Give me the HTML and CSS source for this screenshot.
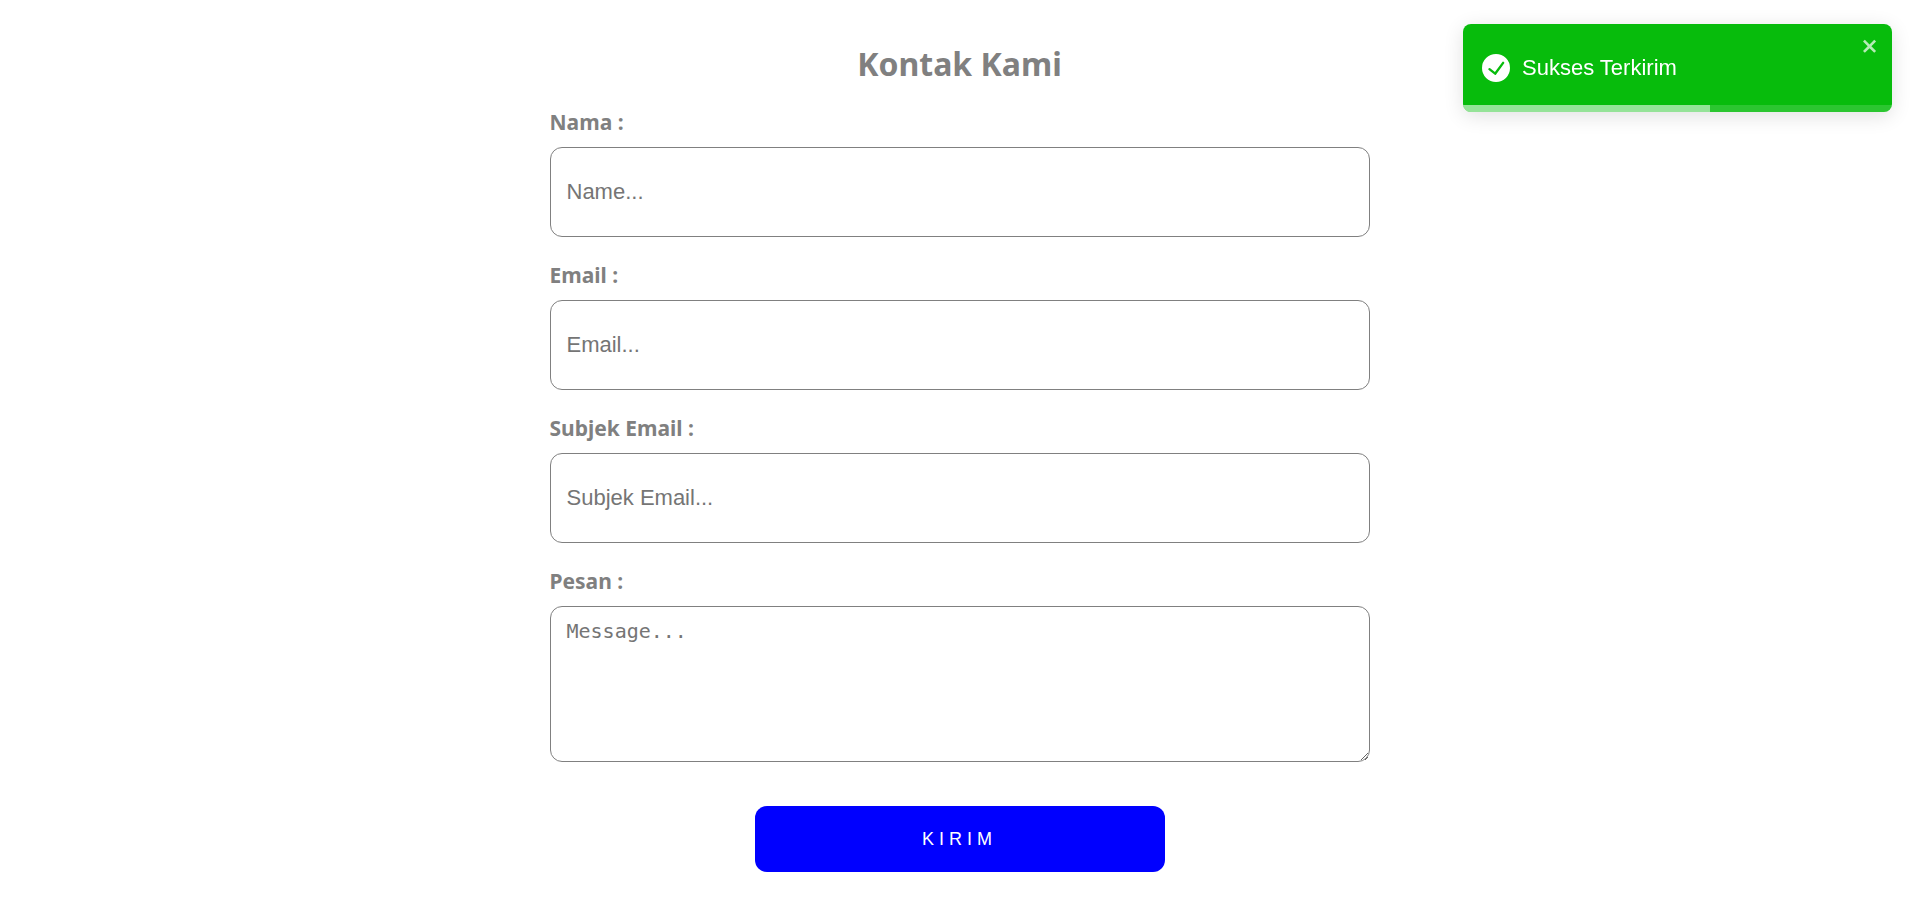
FILE: index.html
```html
<!DOCTYPE html>
<html lang="id">
<head>
<meta charset="utf-8">
<meta name="viewport" content="width=device-width, initial-scale=1">
<title>Kontak Kami</title>
<link rel="stylesheet" href="styles.css">
</head>
<body>
<main class="contact">
  <h1 class="contact-title">Kontak Kami</h1>
  <form class="contact-form">
    <div class="field">
      <label class="field-label" for="name">Nama :</label>
      <input class="field-input" id="name" type="text" placeholder="Name...">
    </div>
    <div class="field">
      <label class="field-label" for="email">Email :</label>
      <input class="field-input" id="email" type="email" placeholder="Email...">
    </div>
    <div class="field">
      <label class="field-label" for="subject">Subjek Email :</label>
      <input class="field-input" id="subject" type="text" placeholder="Subjek Email...">
    </div>
    <div class="field">
      <label class="field-label" for="message">Pesan :</label>
      <textarea class="field-input field-message" id="message" placeholder="Message..."></textarea>
    </div>
    <button class="submit" type="button">KIRIM</button>
  </form>
</main>
<div class="toast" role="alert">
  <div class="toast-body">
    <svg class="toast-icon" viewBox="0 0 24 24" aria-hidden="true">
      <path fill="#fff" d="M12 0a12 12 0 1012 12A12.014 12.014 0 0012 0zm6.927 8.2l-6.845 9.289a1.011 1.011 0 01-1.43.188l-4.888-3.908a1 1 0 111.25-1.562l4.076 3.261 6.227-8.451a1 1 0 111.61 1.183z"/>
    </svg>
    <span>Sukses Terkirim</span>
  </div>
  <button class="toast-close" type="button" aria-label="Tutup">
    <svg class="toast-close-icon" viewBox="0 0 14 16" aria-hidden="true">
      <path fill="#fff" fill-rule="evenodd" d="M7.71 8.23l3.75 3.75-1.48 1.48-3.75-3.75-3.75 3.75L1 11.98l3.75-3.75L1 4.48 2.48 3l3.75 3.75L9.98 3l1.48 1.48-3.75 3.75z"/>
    </svg>
  </button>
  <div class="toast-track"><div class="toast-progress" style="width: 57.6%"></div></div>
</div>
</body>
</html>
```
FILE: styles.css
```css
* {
  box-sizing: border-box;
}

body {
  margin: 0;
  background: #fff;
  color: gray;
  font-family: "Segoe UI", "Noto Sans", sans-serif;
}

.contact {
  width: 100%;
  max-width: 820px;
  margin: 0 auto;
  padding: 40px 0;
}

.contact-title {
  margin: 0 0 18px;
  font-size: 32px;
  line-height: 48px;
  text-align: center;
}

.contact-form {
  display: flex;
  flex-direction: column;
  gap: 22px;
}

.field {
  display: flex;
  flex-direction: column;
  gap: 8px;
}

.field-label {
  font-size: 21px;
  font-weight: 700;
  line-height: 33px;
}

.field-input {
  width: 100%;
  height: 90px;
  padding: 12px 16px;
  border: 1px solid gray;
  border-radius: 12px;
  background: #fff;
  font-family: "Liberation Sans", Arial, sans-serif;
  font-size: 22px;
}

.field-input::placeholder {
  color: #757575;
}

.field-message {
  display: block;
  height: 156px;
  font-family: "DejaVu Sans Mono", monospace;
  font-size: 20px;
  resize: both;
}

.submit {
  align-self: center;
  width: 50%;
  height: 66px;
  margin-top: 22px;
  border: 0;
  border-radius: 12px;
  background: #0000ff;
  color: #fff;
  font-family: "Liberation Sans", Arial, sans-serif;
  font-size: 18px;
  letter-spacing: 5px;
}

.toast {
  position: fixed;
  top: 24px;
  right: 27px;
  display: flex;
  width: 429px;
  height: 88px;
  padding: 12px;
  border-radius: 8px;
  overflow: hidden;
  background: #07bc0c;
  box-shadow: 0 4px 20px rgba(0, 0, 0, 0.12);
  color: #fff;
  font-family: "Liberation Sans", Arial, sans-serif;
  font-size: 22px;
}

.toast-body {
  display: flex;
  flex: 1;
  align-items: center;
  gap: 12px;
  padding: 0 7px;
}

.toast-icon {
  width: 28px;
  height: 28px;
}

.toast-close {
  align-self: flex-start;
  display: flex;
  padding: 0;
  border: 0;
  background: transparent;
  opacity: 0.7;
}

.toast-close-icon {
  width: 19px;
  height: 20px;
}

.toast-track {
  position: absolute;
  right: 0;
  bottom: 0;
  left: 0;
  height: 7px;
  background: rgba(255, 255, 255, 0.15);
}

.toast-progress {
  height: 100%;
  background: rgba(255, 255, 255, 0.5);
}
```
